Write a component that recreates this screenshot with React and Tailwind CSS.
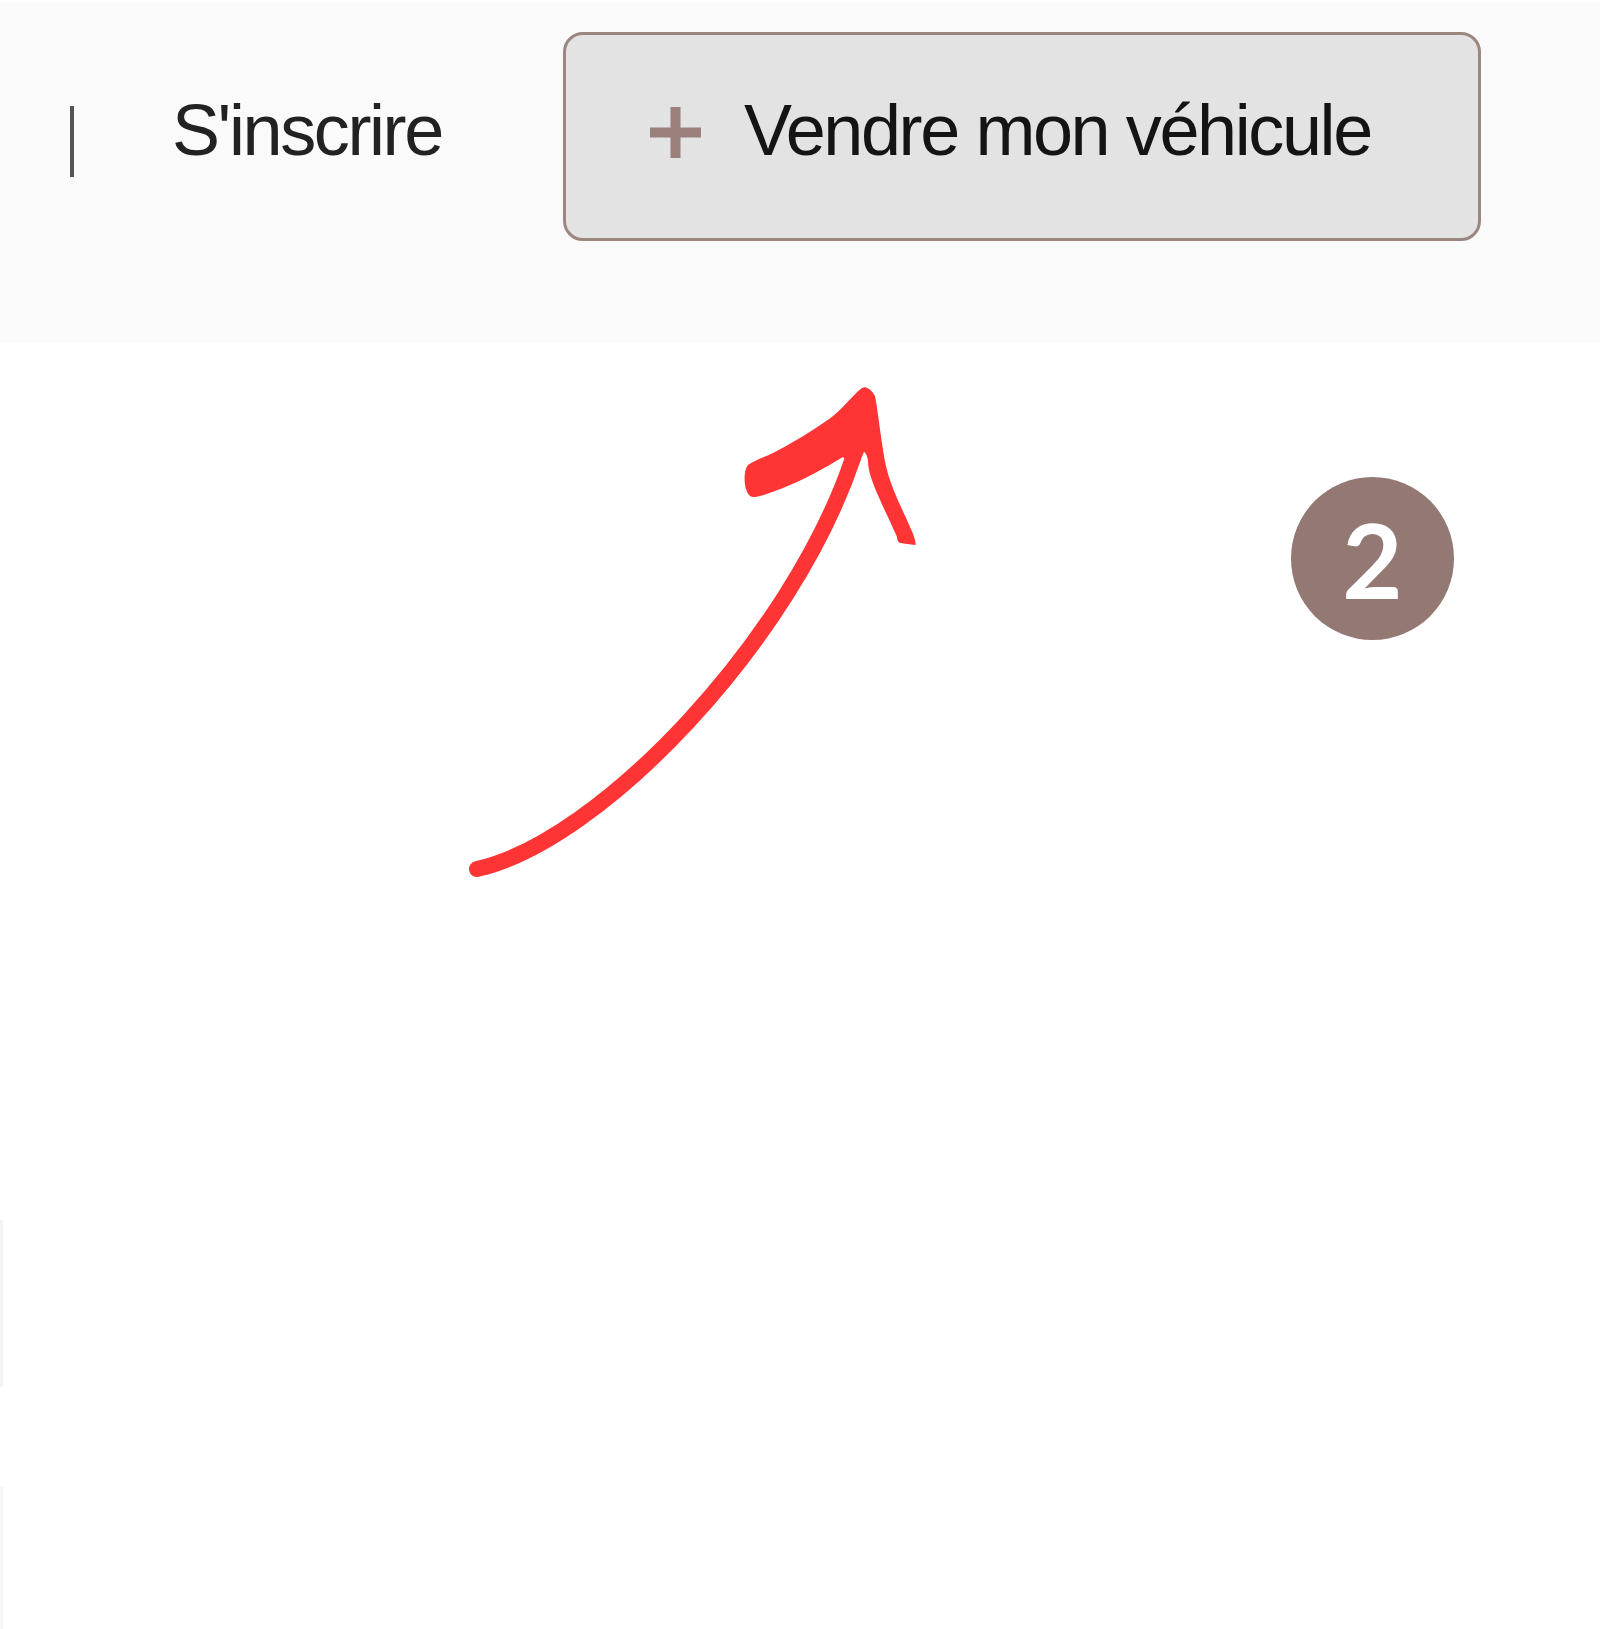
import React from "react";

const sans = { fontFamily: '"Liberation Sans", Arial, sans-serif' };

function Arrow() {
  // hand-drawn red arrow pointing at the button (page coordinates)
  return (
    <svg
      className="absolute left-[440px] top-[360px] w-[500px] h-[530px]"
      viewBox="440 360 500 530"
      fill="none"
    >
      <path
        d="M 477 869 C 600 842 792 640 853 458"
        stroke="#ff3434"
        strokeWidth="16"
        strokeLinecap="round"
      />
      <path
        fill="#ff3434"
        d="M 843 457
           C 825 468 805 479 783 488
           C 770 493 760 497 753 497
           C 744 497 742 472 748 465
           C 755 460 765 457 773 453
           C 785 447 815 430 833 416
           C 842 409 855 393 862 388
           C 867 385 873 392 875 396
           C 878 410 882 450 887 470
           C 892 490 905 515 910 527
           C 914 535 917 545 915 545
           L 900 543
           C 898 542 897 540 897 537
           C 892 525 878 497 873 483
           C 869 472 868 466 868 460
           C 867 455 865 452 864 452
           L 858 466
           L 847 461 Z"
      />
    </svg>
  );
}

function PlusIcon() {
  return (
    <svg className="w-[55px] h-[55px] mt-[11px] shrink-0" viewBox="0 0 55 55">
      <path d="M27.5 2 V53 M2 27.5 H53" stroke="#9a7f7a" strokeWidth="10" />
    </svg>
  );
}

export default function App() {
  return (
    <div className="relative w-[1600px] min-h-[1629px] bg-white overflow-hidden" style={sans}>
      <header className="h-[342px] bg-[#fafafa] border-t-[3px] border-[#fefefe] flex items-start pt-[29px] pl-[70px]">
        <div className="w-[4px] h-[71px] mt-[74px] bg-[#555555]" />
        <div className="w-[489px] pl-[98px] pt-[62px]">
          <span className="text-[72px] leading-none tracking-[-2.4px] text-[#222222]">S'inscrire</span>
        </div>
        <button className="w-[918px] h-[209px] border-[3px] border-[#9b8680] rounded-[20px] bg-[#e3e3e3] flex items-start pl-[82px] pt-[59px]">
          <PlusIcon />
          <span className="ml-[41px] text-[72px] leading-none tracking-[-2.4px] text-[#141414]">
            Vendre mon véhicule
          </span>
        </button>
      </header>

      <div className="flex flex-col">
        <div className="w-[3px] h-[167px] mt-[878px] bg-[#f4f4f4]" />
        <div className="w-[3px] h-[142px] mt-[100px] bg-[#f6f6f6]" />
      </div>

      <Arrow />

      <div className="absolute left-[1291px] top-[477px] w-[163px] h-[163px] rounded-full bg-[#937873] flex items-center justify-center">
        <span
          className="text-[104px] leading-none font-bold text-white"
          style={{ fontFamily: 'Lato, "Open Sans", sans-serif' }}
        >
          2
        </span>
      </div>
    </div>
  );
}
